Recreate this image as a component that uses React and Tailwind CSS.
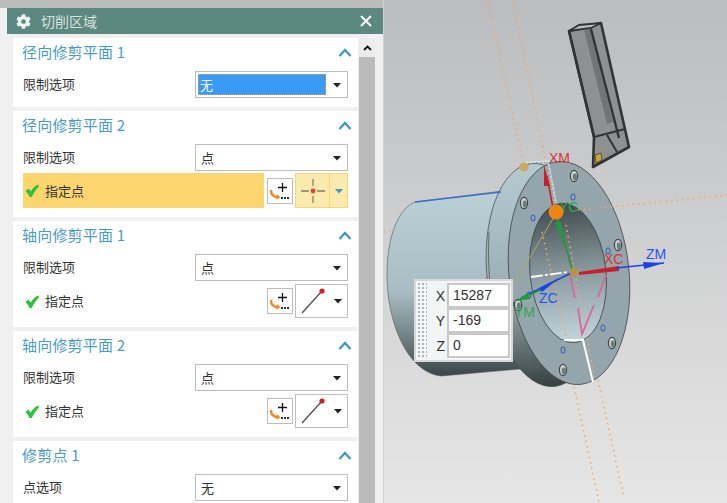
import { FaCog } from 'react-icons/fa';

const FONT = "font-['Noto_Sans_CJK_SC','Noto_Sans',sans-serif]";

function Caret({ color = '#222222' }) {
    return (
        <svg width="10" height="6" viewBox="0 0 10 6">
            <polygon points="1,1 9,1 5,5.5" fill={color} />
        </svg>
    );
}

function ChevronUp() {
    return (
        <svg width="14" height="9" viewBox="0 0 14 9">
            <polyline points="1.5,8 7,2 12.5,8" fill="none" stroke="#3d98c8" strokeWidth="2.4" />
        </svg>
    );
}

function CheckMark() {
    return (
        <svg width="14" height="13" viewBox="0 0 14 13">
            <path d="M0.5 7 L3.5 4.5 L5.8 7.5 C7.5 4.5 9.8 2 13.2 0.5 L14 2.5 C11 5.5 8.6 9 6.8 13 L4.6 13 C3.6 10.5 2.2 8.6 0.5 7 Z" fill="#2cc23a" />
        </svg>
    );
}

function PointButton() {
    return (
        <div className="w-[26px] h-[26px] bg-white border border-[#bdbdbd] flex items-center justify-center shrink-0">
            <svg width="24" height="24" viewBox="0 0 24 24">
                <path d="M14.5 4 V13 M10 8.5 H19" stroke="#111111" strokeWidth="1.3" fill="none" />
                <path d="M3 11 C3 15 5 18 10 18" stroke="#ee8a22" strokeWidth="2.4" fill="none" />
                <path d="M9 15 L12.5 18.5 L8 20.5 Z" fill="#ee8a22" />
                <rect x="13" y="18" width="2" height="2" fill="#333333" />
                <rect x="16" y="18" width="2" height="2" fill="#333333" />
                <rect x="19" y="18" width="2" height="2" fill="#333333" />
            </svg>
        </div>
    );
}

function SelectBox({ value, active }) {
    return (
        <div className="w-[153px] h-[27px] bg-white border border-[#bdbdbd] flex items-center shrink-0">
            {active ? (
                <div className="ml-[2px] w-[128px] h-[21px] bg-[#3a9bf7] border border-dotted border-[#d8a070] text-white text-[13px] leading-[19px] pl-[1px]">{value}</div>
            ) : (
                <div className="pl-[5px] w-[130px] text-[13px] text-[#333333]">{value}</div>
            )}
            <div className="flex-1 flex justify-center"><Caret /></div>
        </div>
    );
}

function SelectRow({ label, value, active }) {
    return (
        <div className="flex items-center justify-between pl-[10px] pr-[10px] h-[27px]">
            <span className="text-[13px] text-[#333333] pb-[2px]">{label}</span>
            <SelectBox value={value} active={active} />
        </div>
    );
}

function PointRow({ highlighted }) {
    if (highlighted) {
        return (
            <div className="flex items-center mt-[2px] ml-[10px] mr-[10px] h-[35px]">
                <div className="w-[241px] h-full bg-[#fdd56f] flex items-center pl-[2px] gap-[6px]">
                    <CheckMark />
                    <span className="text-[13px] text-[#333333]">指定点</span>
                </div>
                <div className="ml-[3px]"><PointButton /></div>
                <div className="ml-[2px] w-[53px] h-full bg-[#faeaae] border border-[#fdd56f] flex">
                    <div className="w-[34px] flex items-center justify-center border-r border-[#fdd56f]">
                        <svg width="28" height="26" viewBox="0 0 28 26">
                            <path d="M14 1 V8 M14 18 V25" stroke="#9a9a78" strokeWidth="1.6" />
                            <path d="M2 13 H10 M18 13 H26" stroke="#444444" strokeWidth="1.2" />
                            <circle cx="14" cy="13" r="2.4" fill="#d9442c" />
                        </svg>
                    </div>
                    <div className="flex-1 flex items-center justify-center"><Caret color="#3d98c8" /></div>
                </div>
            </div>
        );
    }
    return (
        <div className="flex items-center mt-[3px] ml-[10px] mr-[10px] h-[34px]">
            <div className="w-[241px] flex items-center pl-[2px] gap-[6px]">
                <CheckMark />
                <span className="text-[13px] text-[#333333]">指定点</span>
            </div>
            <div className="ml-[3px]"><PointButton /></div>
            <div className="ml-[2px] w-[53px] h-full bg-white border border-[#bdbdbd] flex items-center">
                <svg width="30" height="30" viewBox="0 0 30 30" className="ml-[2px]">
                    <line x1="4" y1="27" x2="24" y2="5" stroke="#555555" strokeWidth="1.4" />
                    <circle cx="24" cy="5" r="2.6" fill="#e01b1b" />
                </svg>
                <div className="flex-1 flex justify-center"><Caret /></div>
            </div>
        </div>
    );
}

function Section({ title, height, children }) {
    return (
        <div className="bg-white shrink-0" style={{ height }}>
            <div className="flex items-center justify-between h-[33px] pb-[5px] pl-[9px] pr-[6px]">
                <span className="text-[15px] text-[#4a9cc8] tracking-[0.2px]">{title}</span>
                <ChevronUp />
            </div>
            {children}
        </div>
    );
}

function Scrollbar() {
    return (
        <div className="w-[16px] shrink-0 ml-px bg-[#bababa]">
            <div className="h-[19px] bg-[#ececec] flex items-center justify-center">
                <svg width="9" height="6" viewBox="0 0 9 6"><polyline points="1,5 4.5,1.5 8,5" fill="none" stroke="#111111" strokeWidth="1.8" /></svg>
            </div>
        </div>
    );
}

function Dialog() {
    return (
        <div className="w-[376px] ml-[7px] flex-1 bg-[#f0f0f0] flex flex-col overflow-hidden">
            <div className="h-[26px] bg-[#5b8880] flex items-center shrink-0 pl-[9px] pr-[11px]">
                <FaCog className="text-[#eef4f2] w-[15px] h-[15px]" />
                <span className="ml-[10px] text-[14px] text-[#d6e4e0]">切削区域</span>
                <svg width="12" height="12" viewBox="0 0 12 12" className="ml-auto">
                    <path d="M1 1 L11 11 M11 1 L1 11" stroke="#ffffff" strokeWidth="2" />
                </svg>
            </div>
            <div className="flex flex-1 pt-[4px] pl-[6px] pr-[8px] min-h-0">
                <div className="w-[345px] shrink-0 flex flex-col gap-[4px] overflow-hidden">
                    <Section title="径向修剪平面 1" height={69}>
                        <SelectRow label="限制选项" value="无" active />
                    </Section>
                    <Section title="径向修剪平面 2" height={106}>
                        <SelectRow label="限制选项" value="点" />
                        <PointRow highlighted />
                    </Section>
                    <Section title="轴向修剪平面 1" height={106}>
                        <SelectRow label="限制选项" value="点" />
                        <PointRow />
                    </Section>
                    <Section title="轴向修剪平面 2" height={106}>
                        <SelectRow label="限制选项" value="点" />
                        <PointRow />
                    </Section>
                    <Section title="修剪点 1" height={69}>
                        <SelectRow label="点选项" value="无" />
                    </Section>
                </div>
                <Scrollbar />
            </div>
        </div>
    );
}

function Viewport() {
    const holes = [[573, 176], [523, 203], [617, 245], [611, 343], [562, 370], [517, 305]];
    const blueHoles = [[572, 197], [532, 218], [607, 251], [602, 328], [562, 350], [528, 295]];
    const dotted = { stroke: '#f2a766', strokeWidth: 1.5, strokeDasharray: '1.5 4', fill: 'none' };
    return (
        <svg width="344" height="503" viewBox="383 0 344 503" className="block absolute inset-0" fontFamily="'Liberation Sans', sans-serif" fontSize="14">
            <defs>
                <linearGradient id="bodyGrad" x1="0" y1="0" x2="0" y2="1">
                    <stop offset="0" stopColor="#bcd0d8" />
                    <stop offset="0.55" stopColor="#a8bcc3" />
                    <stop offset="0.8" stopColor="#6f8083" />
                    <stop offset="1" stopColor="#3a4546" />
                </linearGradient>
                <linearGradient id="flangeGrad" x1="0" y1="0" x2="0" y2="1">
                    <stop offset="0" stopColor="#b6cad2" />
                    <stop offset="0.6" stopColor="#98acb2" />
                    <stop offset="1" stopColor="#363f40" />
                </linearGradient>
                <linearGradient id="holeGrad" x1="0" y1="0" x2="0" y2="1">
                    <stop offset="0" stopColor="#3f4a4b" />
                    <stop offset="0.5" stopColor="#8a9ba0" />
                    <stop offset="1" stopColor="#c4d6dc" />
                </linearGradient>
            </defs>

            {/* cylinder body and flange */}
            <path d="M414 202 L510 190 L530 368 L440 376 C405 372 386 320 386 275 C386 235 398 208 414 202 Z" fill="url(#bodyGrad)" stroke="#555555" strokeWidth="0.6" />
            <ellipse cx="542" cy="275" rx="56" ry="112" transform="rotate(-6 542 275)" fill="url(#flangeGrad)" stroke="#444444" strokeWidth="0.7" />
            <path d="M488 232 C486 270 490 310 500 345" stroke="#555555" strokeWidth="0.8" fill="none" />
            <ellipse cx="568" cy="273" rx="60" ry="112" transform="rotate(-6 568 273)" fill="#94a6ab" stroke="#444444" strokeWidth="0.8" />
            <ellipse cx="567" cy="273" rx="38" ry="70" transform="rotate(-6 567 273)" fill="url(#holeGrad)" stroke="#3a4444" strokeWidth="0.8" />
            <path d="M414 202 L500 192" stroke="#3a6fd0" strokeWidth="1.6" />
            {holes.map(([x, y]) => (
                <g key={`${x}-${y}`}>
                    <ellipse cx={x} cy={y} rx="3.6" ry="5.6" fill="#c8cfcf" stroke="#3d4545" strokeWidth="1.2" />
                    <ellipse cx={x + 0.8} cy={y + 1} rx="2" ry="3.4" fill="#6f7a7c" />
                </g>
            ))}
            {blueHoles.map(([x, y]) => (
                <ellipse key={`${x}-${y}`} cx={x} cy={y} rx="2" ry="3" fill="none" stroke="#3f66c0" strokeWidth="1.1" />
            ))}

            {/* cutting tool */}
            <polygon points="568,31 600,23 628,147 592,167 593,137" fill="#8f9092" stroke="#333333" strokeWidth="2.6" strokeLinejoin="round" />
            <polygon points="583,30 590,29 612,122 606,124" fill="#737476" />
            <polygon points="568,31 578,25 600,23 590,28" fill="#bdbdbd" stroke="#333333" strokeWidth="1.8" />
            <path d="M590 29 L618 138 M568 31 L593 137" stroke="#333333" strokeWidth="2.4" />
            <path d="M593 137 C605 134 612 132 624 129 M606 135 L616 152" stroke="#333333" strokeWidth="2" fill="none" />
            <polygon points="594,155 600,153 601,160 595,163" fill="#c9a536" stroke="#222222" strokeWidth="0.6" />

            {/* dotted guide lines */}
            <path d="M486 0 L522 160" {...dotted} />
            <path d="M512 0 L555 213" {...dotted} />
            <path d="M577 210 L727 195" {...dotted} />
            <path d="M573 387 L598 502" {...dotted} />
            <path d="M597 380 L623 498" {...dotted} />
            <path d="M383 232 L392 230" {...dotted} />
            <path d="M541 232 L567 345" {...dotted} />
            <path d="M565 225 L594 380" {...dotted} />

            {/* sketch lines */}
            <path d="M553 217 L513 284" stroke="#b9a36c" strokeWidth="1" fill="none" />
            <path d="M523 163 L547 161 L555 203" stroke="#d8e4e4" strokeWidth="1.6" fill="none" />
            <path d="M523 164 L547 162 L555 204" stroke="#3f8f90" strokeWidth="0.6" strokeDasharray="2 2" fill="none" />
            <path d="M569 275 L574 298 M577 308 L581 334 L593 305 M597 297 L605 275" stroke="#d8689a" strokeWidth="1.8" fill="none" />
            <path d="M563 340 L582 340 L592 382" stroke="#ffffff" strokeWidth="2" fill="none" />
            <path d="M530 277 L567 272" stroke="#ffffff" strokeWidth="1.8" strokeDasharray="12 2 3 2" fill="none" />

            {/* axes */}
            <path d="M552 208 L546 176" stroke="#c8202a" strokeWidth="1.6" />
            <polygon points="543,165 549,186 543,186" fill="#c8202a" />
            <path d="M555 212 L572 272" stroke="#1d9a3a" strokeWidth="1.6" />
            <polygon points="554,222 560,222 564,248" fill="#1d9a3a" />
            <polygon points="578,272 618,266 618,271 578,275" fill="#c8202a" />
            <path d="M615 268 L663 263" stroke="#1844e0" strokeWidth="1.6" />
            <polygon points="642,262 663,263 643,269" fill="#1844e0" />
            <path d="M572 272 L520 298" stroke="#1844e0" strokeWidth="1.4" />
            <polygon points="558,278 538,288 541,292" fill="#1844e0" />
            <path d="M540 290 L520 298" stroke="#1d9a3a" strokeWidth="1.6" />
            <polygon points="515,301 527,293 529,299" fill="#1d9a3a" />
            <circle cx="523" cy="167" r="4.5" fill="#c8aa5c" />
            <circle cx="555" cy="212" r="7.5" fill="#ee8412" />
            <circle cx="573" cy="272" r="4.5" fill="#b2944a" />

            <text x="548" y="163" fill="#d8343c">XM</text>
            <text x="558" y="212" fill="#2fa84a">YC</text>
            <text x="603" y="264" fill="#d8343c">XC</text>
            <text x="645" y="259" fill="#2a50f0">ZM</text>
            <text x="538" y="303" fill="#2a50f0">ZC</text>
            <text x="513" y="317" fill="#2fa84a">YM</text>
        </svg>
    );
}

function CoordRow({ axis, value }) {
    return (
        <div className="flex items-center h-[25px]">
            <span className="w-[11px] mr-[2px] text-[14px] text-[#333333] text-right leading-none">{axis}</span>
            <div className="w-[63px] h-[25px] bg-white border-2 border-[#c8c8c8] pl-[4px] text-[14px] leading-[21px] text-[#333333]">{value}</div>
        </div>
    );
}

function CoordPopup() {
    return (
        <div className="absolute left-[30px] top-[279px] w-[99px] h-[83px] bg-[#f1f5f6] border-2 border-[#d8d8d8] flex font-['Liberation_Sans',sans-serif]">
            <div className="w-[10px] ml-px my-px bg-[radial-gradient(#b4b4b4_1px,transparent_1px)] bg-[length:4px_4px]" />
            <div className="ml-[7px] pt-[2px] flex flex-col">
                <CoordRow axis="X" value="15287" />
                <CoordRow axis="Y" value="-169" />
                <CoordRow axis="Z" value="0" />
            </div>
        </div>
    );
}

export default function App() {
    return (
        <div className={`w-[727px] h-[503px] flex overflow-hidden ${FONT}`}>
            <div className="w-[383px] h-full bg-[#f0f0f0] flex flex-col shrink-0">
                <div className="h-[8px] bg-[#bcbcbc] shrink-0" />
                <Dialog />
            </div>
            <div className="relative flex-1 h-full bg-gradient-to-b from-[#bbbcbe] to-[#e6e6e6] border-l border-[#d0d0d0]">
                <Viewport />
                <CoordPopup />
            </div>
        </div>
    );
}
